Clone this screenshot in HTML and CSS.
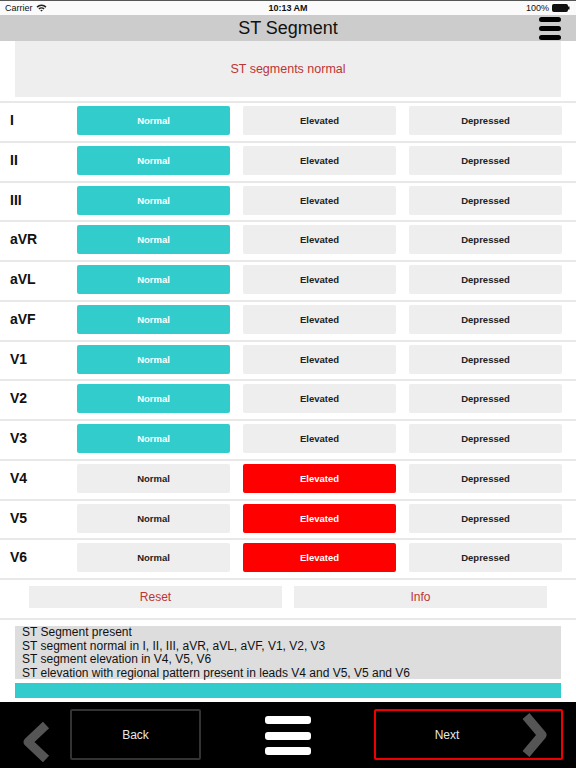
FILE: index.html
```html
<!DOCTYPE html>
<html>
<head>
<meta charset="utf-8">
<link rel="stylesheet" href="styles.css">
</head>
<body>
<div class="status">
  <div class="status-left">Carrier
    <svg class="wifi" width="11" height="8" viewBox="0 0 11 8"><path d="M0.5 2.6 A7 7 0 0 1 10.5 2.6 L9.4 3.7 A5.5 5.5 0 0 0 1.6 3.7 Z M2.4 4.5 A4.3 4.3 0 0 1 8.6 4.5 L7.5 5.6 A2.8 2.8 0 0 0 3.5 5.6 Z M4.3 6.4 A1.7 1.7 0 0 1 6.7 6.4 L5.5 7.6 Z" fill="#222"/></svg>
  </div>
  <div class="status-time">10:13 AM</div>
  <div class="status-right">100%
    <svg width="18" height="8" viewBox="0 0 18 8"><rect x="0.5" y="0.5" width="15" height="7" rx="1" fill="#111" stroke="#111"/><rect x="16" y="2.5" width="1.5" height="3" fill="#111"/></svg>
  </div>
</div>
<div class="header">
  <div class="title">ST Segment</div>
  <div class="menu"><span></span><span></span><span></span></div>
</div>
<div class="message">ST segments normal</div>
<div class="leads">
  <div class="row"><div class="lead">I</div><div class="btn teal">Normal</div><div class="btn">Elevated</div><div class="btn">Depressed</div></div>
  <div class="row"><div class="lead">II</div><div class="btn teal">Normal</div><div class="btn">Elevated</div><div class="btn">Depressed</div></div>
  <div class="row"><div class="lead">III</div><div class="btn teal">Normal</div><div class="btn">Elevated</div><div class="btn">Depressed</div></div>
  <div class="row"><div class="lead">aVR</div><div class="btn teal">Normal</div><div class="btn">Elevated</div><div class="btn">Depressed</div></div>
  <div class="row"><div class="lead">aVL</div><div class="btn teal">Normal</div><div class="btn">Elevated</div><div class="btn">Depressed</div></div>
  <div class="row"><div class="lead">aVF</div><div class="btn teal">Normal</div><div class="btn">Elevated</div><div class="btn">Depressed</div></div>
  <div class="row"><div class="lead">V1</div><div class="btn teal">Normal</div><div class="btn">Elevated</div><div class="btn">Depressed</div></div>
  <div class="row"><div class="lead">V2</div><div class="btn teal">Normal</div><div class="btn">Elevated</div><div class="btn">Depressed</div></div>
  <div class="row"><div class="lead">V3</div><div class="btn teal">Normal</div><div class="btn">Elevated</div><div class="btn">Depressed</div></div>
  <div class="row"><div class="lead">V4</div><div class="btn">Normal</div><div class="btn red">Elevated</div><div class="btn">Depressed</div></div>
  <div class="row"><div class="lead">V5</div><div class="btn">Normal</div><div class="btn red">Elevated</div><div class="btn">Depressed</div></div>
  <div class="row"><div class="lead">V6</div><div class="btn">Normal</div><div class="btn red">Elevated</div><div class="btn">Depressed</div></div>
</div>
<div class="actions">
  <div class="action">Reset</div>
  <div class="action">Info</div>
</div>
<div class="summary-wrap">
  <div class="summary">
    <div>ST Segment present</div>
    <div>ST segment normal in I, II, III, aVR, aVL, aVF, V1, V2, V3</div>
    <div>ST segment elevation in V4, V5, V6</div>
    <div>ST elevation with regional pattern present in leads V4 and V5, V5 and V6</div>
  </div>
  <div class="progress"></div>
</div>
<div class="nav">
  <svg class="chev-left" width="30" height="40" viewBox="0 0 30 40"><polyline points="26,3 8,20 26,37" fill="none" stroke="#555" stroke-width="9" stroke-linejoin="round"/></svg>
  <div class="navbtn back">Back</div>
  <div class="navmenu"><span></span><span></span><span></span></div>
  <div class="navbtn next">Next
    <svg class="chev-right" width="26" height="44" viewBox="0 0 26 44"><polyline points="4,3 20,22 4,41" fill="none" stroke="#555" stroke-width="9" stroke-linejoin="round"/></svg>
  </div>
</div>
</body>
</html>
```
FILE: styles.css
```css
* { box-sizing: border-box; }
html, body { margin: 0; padding: 0; }
body {
  width: 576px;
  height: 768px;
  overflow: hidden;
  background: #fff;
  font-family: "Liberation Sans", Arial, sans-serif;
  color: #111;
}
.status {
  height: 15px;
  border-top: 1px solid #555;
  display: flex;
  align-items: center;
  justify-content: space-between;
  padding: 0 6px 0 5px;
  font-size: 9px;
  position: relative;
  background: #fafafa;
}
.status-left, .status-right { display: flex; align-items: center; gap: 3px; }
.status-time {
  position: absolute;
  left: 0; right: 0;
  text-align: center;
  font-weight: bold;
  pointer-events: none;
}
.header {
  height: 26px;
  background: #cccccc;
  display: flex;
  align-items: center;
  justify-content: center;
  position: relative;
}
.title { font-size: 18px; color: #111; }
.menu {
  position: absolute;
  right: 15px;
  top: 2px;
  width: 22px;
  display: flex;
  flex-direction: column;
  gap: 4px;
}
.menu span { display: block; height: 5px; background: #000; border-radius: 3px; }
.message {
  margin: 0 15px;
  height: 56px;
  background: #eeeeee;
  display: flex;
  align-items: center;
  justify-content: center;
  color: #bb3535;
  font-size: 12.5px;
}
.leads { margin-top: 4px; }
.row {
  height: 39.75px;
  border-top: 2px solid #e8e8e8;
  display: grid;
  grid-template-columns: 64px 153px 153px 153px;
  column-gap: 13px;
  align-items: start;
  padding-top: 3px;
}
.lead {
  padding-left: 10px;
  font-weight: bold;
  font-size: 14px;
  line-height: 29px;
}
.btn {
  height: 29px;
  background: #eeeeee;
  border-radius: 2px;
  display: flex;
  align-items: center;
  justify-content: center;
  font-size: 9.5px;
  font-weight: bold;
  color: #222;
}
.btn.teal { background: #33cccc; color: #fff; }
.btn.red { background: #ff0000; color: #fff; }
.actions {
  height: 40px;
  border-top: 2px solid #e8e8e8;
  display: flex;
  gap: 12px;
  padding: 6px 0 0 29px;
}
.action {
  width: 253px;
  height: 22px;
  background: #eeeeee;
  color: #bb3535;
  font-size: 12px;
  display: flex;
  align-items: center;
  justify-content: center;
}
.summary-wrap {
  border-top: 2px solid #e8e8e8;
  padding: 6px 15px 0 15px;
}
.summary {
  height: 53px;
  background: #dddddd;
  padding: 0 7px;
  font-size: 12px;
  line-height: 13.5px;
  color: #111;
}
.progress {
  margin-top: 4px;
  height: 15px;
  background: #33cccc;
}
.nav {
  margin-top: 4px;
  height: 66px;
  background: #000;
  display: flex;
  align-items: flex-start;
  padding: 7px 0 0 20px;
}
.chev-left { margin-top: 13px; }
.navbtn {
  height: 51px;
  border: 2px solid #333;
  border-radius: 2px;
  color: #e8e8e8;
  font-size: 12px;
  display: flex;
  align-items: center;
  justify-content: center;
}
.back { width: 131px; margin-left: 20px; }
.navmenu {
  margin-left: 64px;
  margin-top: 7px;
  width: 46px;
  display: flex;
  flex-direction: column;
  gap: 7.5px;
}
.navmenu span { display: block; height: 8px; background: #fff; border-radius: 3px; }
.next {
  width: 189px;
  margin-left: 63px;
  border-color: #ee0000;
  position: relative;
  padding-right: 43px;
}
.chev-right {
  position: absolute;
  right: 13px;
  top: 2px;
}
```
